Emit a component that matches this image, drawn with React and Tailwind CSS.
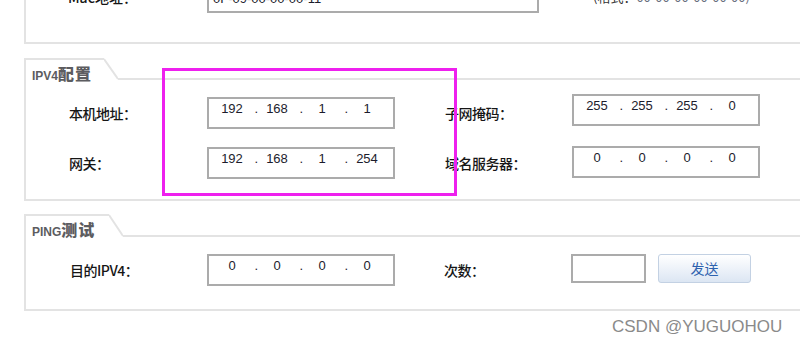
import React, { Fragment } from "react";

const IpInput = ({ parts, extra = "" }) => (
  <div
    className={
      "flex h-[32px] w-[188px] shrink-0 border-2 border-[#ababab] bg-white pl-[4px] pt-[2px] font-['Liberation_Sans',Arial,sans-serif] text-[13px] leading-[16px] text-[#1c1c2c] " +
      extra
    }
  >
    {parts.map((p, i) => (
      <Fragment key={i}>
        {i > 0 && <span className="w-[7px] text-right">.</span>}
        <span className="w-[38px] text-center">{p}</span>
      </Fragment>
    ))}
  </div>
);

const Diagonal = ({ h }) => (
  <svg width="14" height={h} className="block shrink-0" viewBox={`0 0 14 ${h}`}>
    <line x1="0" y1="1" x2="14" y2={h - 1} stroke="#e3e3e3" strokeWidth="2" />
  </svg>
);

const TabHeader = ({ latin, cjk, tabW, h, hNum }) => (
  <div className="flex items-stretch">
    <div
      className={
        "shrink-0 border-l-2 border-t-2 border-[#e3e3e3] pl-[6px] pt-[5px] leading-[16px] whitespace-nowrap text-[#5c5c60] " +
        tabW +
        " " +
        h
      }
    >
      <span className="font-['Liberation_Sans',Arial,sans-serif] text-[12px] font-bold">{latin}</span>
      <span className="font-['Noto_Sans_CJK_SC',sans-serif] text-[16px] font-black tracking-[1px]">{cjk}</span>
    </div>
    <Diagonal h={hNum} />
    <div className="flex-1 border-b-2 border-[#e3e3e3]" />
  </div>
);

export default function App() {
  return (
    <div className="relative h-[344px] w-[800px] overflow-hidden bg-white font-['Noto_Sans_CJK_SC','Noto_Sans',sans-serif] text-[14px] font-medium text-[#161616]">
      {/* Top (cut-off) panel */}
      <div className="-mt-[21px] ml-[24px] flex h-[65px] w-[800px] items-start border-b-2 border-l-2 border-[#e3e3e3] pt-[2px]">
        <div className="flex h-[32px] items-center">
          <div className="w-[181px] pl-[42px] leading-[16px]">Mac地址：</div>
          <div className="h-[32px] w-[332px] border-2 border-[#ababab] pl-[4px] pt-[8px] font-['Liberation_Sans',Arial,sans-serif] text-[13px] leading-[16px] font-normal text-[#1c1c2c]">
            0F-09-00-00-00-11
          </div>
          <div className="ml-[54px] font-['Noto_Sans_CJK_SC',sans-serif] text-[13px] leading-[16px] font-normal text-[#6a7080]">
            <span className="text-[#333]">(格式：</span>00-00-00-00-00-00)
          </div>
        </div>
      </div>

      {/* IPV4 section */}
      <div className="ml-[24px] mt-[14px] w-[800px]">
        <TabHeader latin="IPV4" cjk="配置" tabW="w-[80px]" h="h-[22px]" hNum={22} />
        <div className="flex h-[121px] flex-col gap-[18px] border-b-2 border-l-2 border-[#e3e3e3] pt-[17px]">
          <div className="flex h-[32px] items-center">
            <div className="w-[181px] pl-[43px] tracking-[-0.5px]">本机地址：</div>
            <IpInput parts={["192", "168", "1", "1"]} />
            <div className="w-[177px] pl-[50px] tracking-[-0.5px]">子网掩码：</div>
            <IpInput parts={["255", "255", "255", "0"]} extra="-mt-[6px] w-[187px]" />
          </div>
          <div className="flex h-[32px] items-center">
            <div className="w-[181px] pl-[43px] tracking-[-0.5px]">网关：</div>
            <IpInput parts={["192", "168", "1", "254"]} />
            <div className="w-[177px] pl-[50px] tracking-[-0.5px]">域名服务器：</div>
            <IpInput parts={["0", "0", "0", "0"]} extra="-mt-[2px] h-[30px] w-[187px]" />
          </div>
        </div>
      </div>

      {/* PING section */}
      <div className="ml-[24px] mt-[13px] w-[800px]">
        <TabHeader latin="PING" cjk="测试" tabW="w-[85px]" h="h-[23px]" hNum={23} />
        <div className="h-[74px] border-b-2 border-l-2 border-[#e3e3e3] pt-[17px]">
          <div className="flex h-[32px] items-start">
            <div className="w-[181px] self-center pl-[44px] tracking-[-0.5px]">目的IPV4：</div>
            <IpInput parts={["0", "0", "0", "0"]} />
            <div className="w-[176px] self-center pl-[49px] tracking-[-0.5px]">次数：</div>
            <div className="h-[29px] w-[75px] border-2 border-[#ababab] bg-white" />
            <button className="ml-[12px] flex h-[29px] w-[93px] items-center justify-center rounded-[3px] border border-[#c3d1e3] bg-gradient-to-b from-[#ffffff] to-[#dce6f3] text-[14px] font-normal text-[#2e62ae]">
              发送
            </button>
          </div>
        </div>
      </div>

      {/* Highlight rectangle */}
      <div className="pointer-events-none absolute left-[162px] top-[68px] h-[128px] w-[295px] border-[3px] border-[#ee20ee]" />

      {/* Watermark */}
      <div className="absolute left-[612px] top-[317px] font-['Liberation_Sans',Arial,sans-serif] text-[17px] leading-[20px] font-normal text-[#8a8a8a]">
        CSDN @YUGUOHOU
      </div>
    </div>
  );
}
